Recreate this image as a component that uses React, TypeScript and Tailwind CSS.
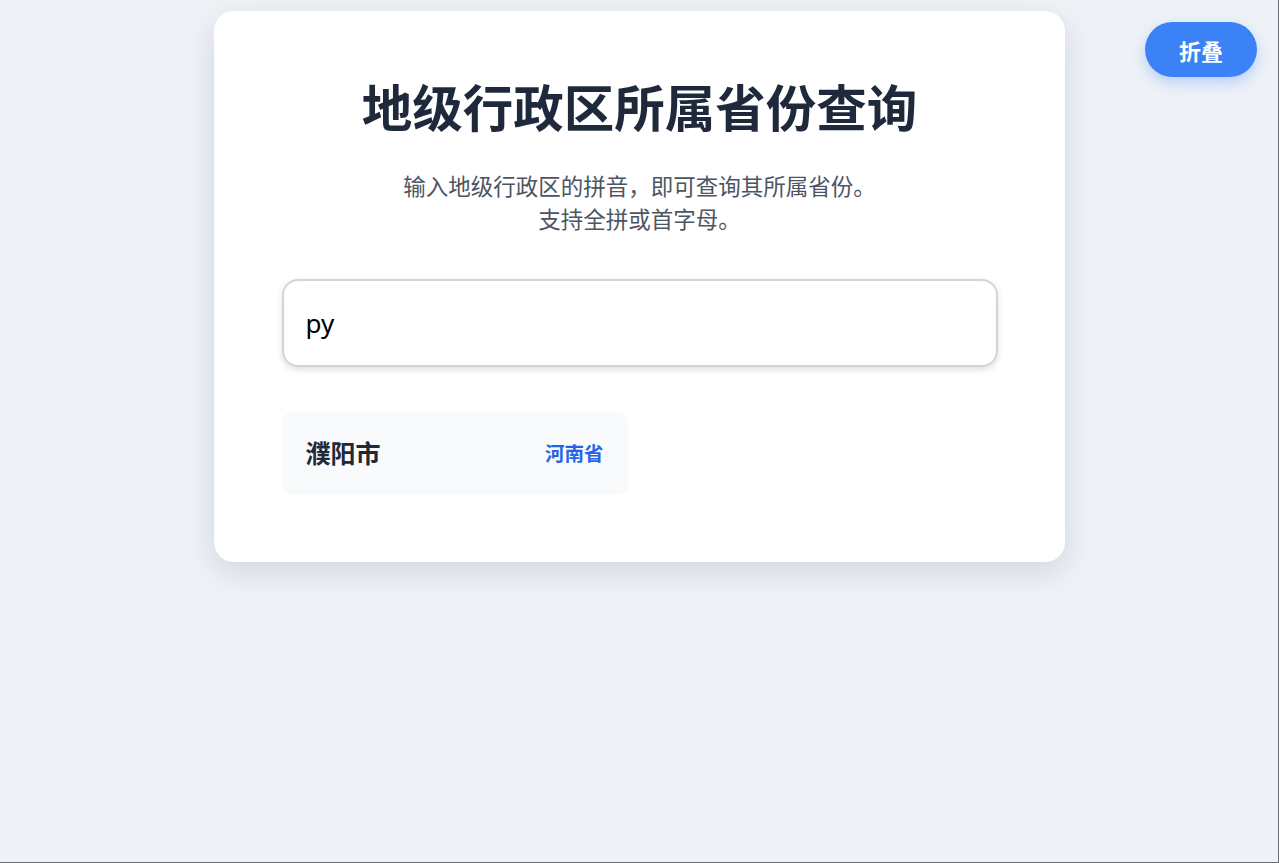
import React, { useState } from 'react';

const provinces: { city: string; province: string }[] = [
  { city: '濮阳市', province: '河南省' },
];

export default function App() {
  const [query, setQuery] = useState('py');
  const [collapsed, setCollapsed] = useState(false);

  return (
    <div
      className="relative w-[1279px] h-[863px] overflow-hidden bg-[#eef2f7] border-r border-b border-[#6b6f75]"
      style={{ fontFamily: '"Noto Sans", "Noto Sans CJK SC", sans-serif' }}
    >
      <div className="flex justify-center pt-[11px]">
        <div className="w-[851px] bg-white rounded-[20px] shadow-[0_10px_30px_rgba(15,23,42,0.12)] pl-[68px] pr-[67px] pt-[67px] pb-[67px]">
          <h1 className="text-center text-[50.5px] leading-[60px] font-bold text-[#1e293b]">
            地级行政区所属省份查询
          </h1>
          <p className="mt-[32px] text-center text-[22.5px] leading-[33px] text-[#4b5563]">
            输入地级行政区的拼音，即可查询其所属省份。
            <br />
            支持全拼或首字母。
          </p>

          <input
            value={query}
            onChange={(e) => setQuery(e.target.value)}
            className="mt-[43px] block w-full h-[88px] rounded-[16px] border-2 border-[#d1d5db] px-[22px] text-[26px] text-black outline-none shadow-[0_3px_6px_rgba(0,0,0,0.12)]"
          />

          {!collapsed && (
            <div className="mt-[45px] grid grid-cols-2 gap-6">
              {provinces.map((p) => (
                <div
                  key={p.city}
                  className="h-[83px] rounded-[10px] bg-[#f8fafc] px-6 flex items-center justify-between"
                >
                  <span className="text-[25px] font-bold text-[#1f2937]">{p.city}</span>
                  <span className="text-[19.5px] font-bold text-[#2563eb]">{p.province}</span>
                </div>
              ))}
            </div>
          )}
        </div>
      </div>

      <button
        onClick={() => setCollapsed(!collapsed)}
        className="absolute top-[22px] right-[21px] w-[112px] h-[55px] pt-[3px] rounded-full bg-[#3b82f6] text-white text-[22px] font-bold shadow-[0_6px_14px_rgba(59,130,246,0.3)]"
      >
        折叠
      </button>
    </div>
  );
}
